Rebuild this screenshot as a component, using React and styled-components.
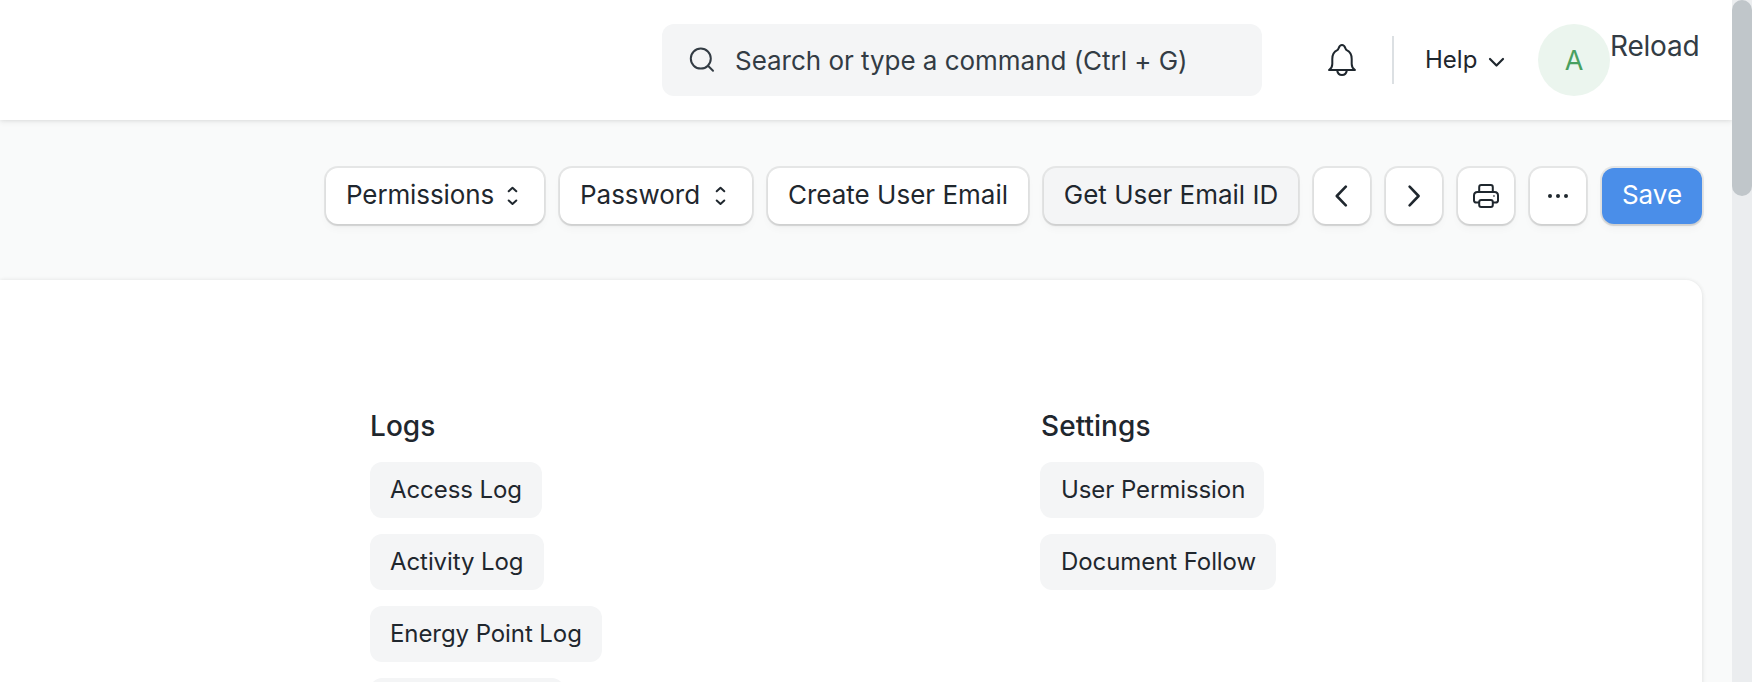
import React from "react";
import styled, { createGlobalStyle } from "styled-components";

const GlobalStyle = createGlobalStyle`
  *, *::before, *::after { box-sizing: border-box; }
  body {
    margin: 0;
    overflow: hidden;
    background: #f9fafa;
    color: #1f272e;
    font-family: Inter, "Liberation Sans", sans-serif;
    font-size: 26px;
    -webkit-font-smoothing: antialiased;
  }
`;

const Page = styled.div`
  display: flex;
  width: 1752px;
  height: 682px;
  overflow: hidden;
`;

const Main = styled.div`
  flex: 1;
  min-width: 0;
  display: flex;
  flex-direction: column;
  overflow: hidden;
`;

const ScrollTrack = styled.div`
  width: 20px;
  background: #ebedef;
`;

const ScrollThumb = styled.div`
  height: 196px;
  border-radius: 12px;
  background: #c0c6ca;
`;

const Navbar = styled.header`
  flex: none;
  display: flex;
  align-items: center;
  justify-content: flex-end;
  height: 120px;
  padding-right: 34px;
  background: #fff;
  box-shadow: 0 2px 6px rgba(0, 0, 0, 0.07), 0 1px 3px rgba(0, 0, 0, 0.05);
`;

const SearchBox = styled.div`
  display: flex;
  align-items: center;
  gap: 19px;
  width: 600px;
  height: 72px;
  padding: 0 26px;
  border-radius: 12px;
  background: #f4f5f6;
  color: #333c44;
  letter-spacing: -0.03px;
  white-space: nowrap;
`;

const NavIcon = styled.div`
  display: flex;
  margin-left: 64px;
`;

const Divider = styled.div`
  width: 2px;
  height: 48px;
  margin-left: 34px;
  background: #dce0e3;
`;

const HelpLink = styled.div`
  display: flex;
  align-items: center;
  gap: 11px;
  width: 81px;
  margin-left: 31px;
  font-size: 24px;
  line-height: 28px;
`;

const HelpLabel = styled.span`
  width: 51px;
  padding-bottom: 1px;
`;

const Avatar = styled.div`
  display: flex;
  align-items: center;
  justify-content: center;
  width: 72px;
  height: 72px;
  margin-left: 32px;
  border-radius: 50%;
  background: #ebf5ee;
  color: #48a05f;
  font-size: 27px;
`;

const ReloadText = styled.div`
  width: 88px;
  height: 72px;
  line-height: 44px;
  color: #333c44;
  font-size: 28px;
  letter-spacing: -0.2px;
  white-space: nowrap;
`;

const Toolbar = styled.div`
  flex: none;
  display: flex;
  justify-content: flex-end;
  gap: 16px;
  padding: 48px 30px 56px 0;
`;

const Button = styled.button`
  display: flex;
  align-items: center;
  justify-content: ${(p) => (p.$between ? "space-between" : "center")};
  width: ${(p) => p.$width || 56}px;
  height: 56px;
  padding: ${(p) => (p.$between ? "0 24px 0 20px" : "0")};
  border: 0;
  border-radius: 12px;
  background: ${(p) => p.$bg || "#fff"};
  color: ${(p) => p.$color || "#1f272e"};
  font: inherit;
  letter-spacing: ${(p) => p.$tracking || "normal"};
  line-height: 52px;
  white-space: nowrap;
  box-shadow: 0 0 0 2px rgba(0, 0, 0, 0.08), 0 2px 2px rgba(0, 0, 0, 0.08),
    0 5px 8px rgba(0, 0, 0, 0.03);
`;

const ButtonLabel = styled.span`
  padding-bottom: 2px;
`;

const Card = styled.section`
  flex: 1;
  display: flex;
  margin-right: 30px;
  padding: 126px 0 0 370px;
  border-top-right-radius: 16px;
  background: #fff;
  box-shadow: 0 0 4px rgba(0, 0, 0, 0.08), 0 2px 6px rgba(0, 0, 0, 0.05);
`;

const LinkColumn = styled.div`
  flex: none;
  display: flex;
  flex-direction: column;
  align-items: flex-start;
  gap: 16px;
  width: 670px;
  text-indent: ${(p) => p.$indent}px;
`;

const Heading = styled.h2`
  height: 40px;
  margin: 0;
  font-size: 28px;
  font-weight: 500;
  letter-spacing: 0.05px;
  line-height: 40px;
`;

const Pill = styled.div`
  flex: none;
  width: ${(p) => p.$width}px;
  height: 56px;
  padding-left: 20px;
  border-radius: 12px;
  background: #f4f5f6;
  font-size: 24px;
  letter-spacing: -0.08px;
  line-height: 55px;
  white-space: nowrap;
`;

const Stroke = ({ w, h, sw = 2, children }) => (
  <svg width={w} height={h} viewBox={`0 0 ${w} ${h}`} fill="none" stroke="currentColor"
    strokeWidth={sw} strokeLinecap="round" strokeLinejoin="round">
    {children}
  </svg>
);

const SearchIcon = () => (
  <Stroke w={28} h={28}>
    <circle cx="12.8" cy="12.6" r="10" />
    <path d="M20 19.8 L25 24.8" />
  </Stroke>
);

const BellIcon = () => (
  <Stroke w={32} h={36}>
    <path d="M3 28 C5.3 26.6 6.3 24.6 6.3 22 V17 C6.3 12.4 8.2 9.6 11.3 8.2 C13.1 7.4 12.4 3 16 3 C19.6 3 18.9 7.4 20.7 8.2 C23.8 9.6 25.7 12.4 25.7 17 V22 C25.7 24.6 26.7 26.6 29 28 Z" />
    <path d="M11.2 28.5 C11.6 31.2 13.4 33 16 33 C18.6 33 20.4 31.2 20.8 28.5" />
  </Stroke>
);

const ChevronDown = () => (
  <Stroke w={19} h={18} sw={2.2}><path d="M3 8 L9.5 14.5 L16 8" /></Stroke>
);

const SelectIcon = () => (
  <Stroke w={14} h={20}>
    <path d="M2.7 5.3 L6.5 1.8 L10.3 5.3 M2.7 14.5 L6.5 18 L10.3 14.5" />
  </Stroke>
);

const PrinterIcon = () => (
  <Stroke w={28} h={28}>
    <path d="M7.2 9.5 V5.2 C7.2 3.8 8 3 9.2 3 H18.8 C20 3 20.8 3.8 20.8 5.2 V9.5" />
    <path d="M7 20.6 H4.5 C3 20.6 2 19.8 2 18.5 V13.5 C2 11.3 3.4 10 5.5 10 H22.5 C24.6 10 26 11.3 26 13.5 V18.5 C26 19.8 25 20.6 23.5 20.6 H21" />
    <rect x="7.2" y="18" width="13.6" height="7" rx="2" />
    <circle cx="21.8" cy="14" r="0.5" strokeWidth="1" opacity=".6" />
  </Stroke>
);

const DotsIcon = () => (
  <svg width="24" height="8" viewBox="0 0 24 8" fill="currentColor">
    <circle cx="4" cy="4" r="2" />
    <circle cx="12" cy="4" r="2" />
    <circle cx="20" cy="4" r="2" />
  </svg>
);

const columns = [
  { title: "Logs", indent: 0, links: [["Access Log", 172], ["Activity Log", 174], ["Energy Point Log", 232], ["", 194]] },
  { title: "Settings", indent: 1, links: [["User Permission", 224], ["Document Follow", 236]] },
];

export default function App() {
  return (
    <>
      <GlobalStyle />
      <Page>
        <Main>
          <Navbar>
            <SearchBox><SearchIcon /><span>Search or type a command (Ctrl + G)</span></SearchBox>
            <NavIcon><BellIcon /></NavIcon>
            <Divider />
            <HelpLink><HelpLabel>Help</HelpLabel><ChevronDown /></HelpLink>
            <Avatar>A</Avatar>
            <ReloadText>Reload</ReloadText>
          </Navbar>
          <Toolbar>
            <Button $width={218} $between $tracking="-0.12px"><ButtonLabel>Permissions</ButtonLabel><SelectIcon /></Button>
            <Button $width={192} $between $tracking="-0.04px"><ButtonLabel>Password</ButtonLabel><SelectIcon /></Button>
            <Button $width={260}><ButtonLabel>Create User Email</ButtonLabel></Button>
            <Button $width={254} $bg="#f4f5f6"><ButtonLabel>Get User Email ID</ButtonLabel></Button>
            <Button aria-label="Previous">
              <Stroke w={14} h={24} sw={2.6}><path d="M10.8 2.7 L1.8 12 L10.8 21.3" /></Stroke>
            </Button>
            <Button aria-label="Next">
              <Stroke w={14} h={24} sw={2.6}><path d="M2.6 2.7 L11.6 12 L2.6 21.3" /></Stroke>
            </Button>
            <Button aria-label="Print"><PrinterIcon /></Button>
            <Button aria-label="More"><DotsIcon /></Button>
            <Button $width={100} $bg="#4a8ee9" $color="#fff"><ButtonLabel>Save</ButtonLabel></Button>
          </Toolbar>
          <Card>
            {columns.map((column) => (
              <LinkColumn key={column.title} $indent={column.indent}>
                <Heading>{column.title}</Heading>
                {column.links.map(([label, width], i) => (
                  <Pill key={i} $width={width}>{label}</Pill>
                ))}
              </LinkColumn>
            ))}
          </Card>
        </Main>
        <ScrollTrack><ScrollThumb /></ScrollTrack>
      </Page>
    </>
  );
}
